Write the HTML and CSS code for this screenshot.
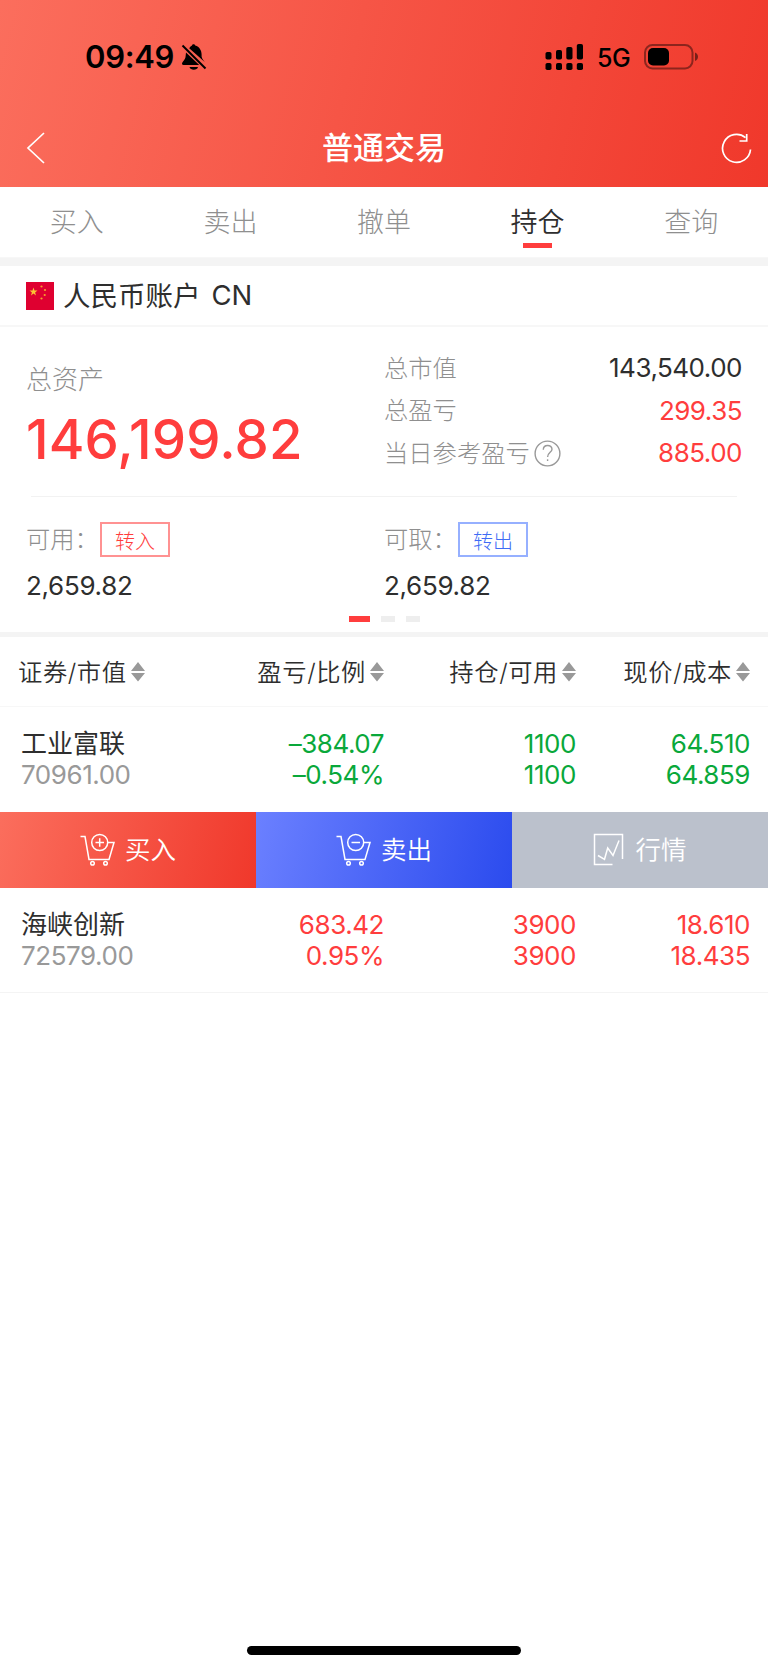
FILE: index.html
```html
<!DOCTYPE html>
<html lang="zh-CN">
<head>
  <meta charset="UTF-8" />
  <meta name="viewport" content="width=device-width, initial-scale=1.0"/>
  <title>普通交易</title>
  <link rel="stylesheet" href="styles.css">
</head>
<body>

  <header class="header">
    <div class="status-bar">
      <div class="status-left">
        <span class="clock">09:49</span>
        <svg class="bell" width="26" height="28" viewBox="0 0 26 28">
          <path d="M8.2 5.2C9 3.9 10 3 11 2.5C11.2 .9 13.8 .9 14.2 2.5C18.5 3.7 20.6 7.5 20.6 11.5V13.5C21 16 22.5 17.3 24 19.3Z" />
          <path d="M5 9.5L18.2 22H2.5C.9 22 .6 20.3 1.5 19.2C3.5 16.8 4.6 15.5 4.7 12.5Z" />
          <path d="M8.5 24h8.5c-.6 3.6-7.8 3.6-8.5 0z" />
          <path class="slash" d="M1.5 2.5L24.5 25.5" />
        </svg>
      </div>
      <div class="status-right">
        <svg class="signal" width="39" height="28" viewBox="0 0 39 28">
          <rect x="0.5" y="9" width="6" height="7.5" rx="1.8" />
          <rect x="11" y="7" width="6" height="9.5" rx="1.8" />
          <rect x="21.3" y="4" width="6.2" height="12.5" rx="1.8" />
          <rect x="31.8" y="1" width="6.2" height="15.5" rx="1.8" />
          <rect x="0.5" y="20" width="6" height="7" rx="1.8" />
          <rect x="11" y="20" width="6" height="7" rx="1.8" />
          <rect x="21.3" y="20" width="6.2" height="7" rx="1.8" />
          <rect x="31.8" y="20" width="6.2" height="7" rx="1.8" />
        </svg>
        <span class="network">5G</span>
        <svg class="battery" width="56" height="26" viewBox="0 0 56 26">
          <rect x="1" y="1" width="47.5" height="23.5" rx="7.5" fill="none" stroke="#000" stroke-opacity=".42" stroke-width="2" />
          <path d="M51 8.5c4 1.5 4 7 0 8.5z" fill-opacity=".5" />
          <rect x="4" y="4" width="21" height="17.5" rx="5" />
        </svg>
      </div>
    </div>
    <div class="nav-bar">
      <svg class="back" width="20" height="32" viewBox="0 0 20 32">
        <path d="M18 1L2 16L18 31" />
      </svg>
      <h1>普通交易</h1>
      <svg class="refresh" width="32" height="32" viewBox="0 0 32 32">
        <path d="M24.5 4.6A14 14 0 1 0 29.5 16.5" />
        <path d="M25.7 1V8H18.5" />
      </svg>
    </div>
  </header>

  <nav class="tabs">
    <a class="tab">买入</a>
    <a class="tab">卖出</a>
    <a class="tab">撤单</a>
    <a class="tab active">持仓</a>
    <a class="tab">查询</a>
  </nav>

  <section class="account">
    <svg class="flag" width="28" height="28" viewBox="0 0 28 28">
      <rect width="28" height="28" fill="#df0030" />
      <path fill="#fbc534" d="M7.5 5.5l1 3h3l-2.4 1.9.9 3-2.5-1.8-2.5 1.8.9-3-2.4-1.9h3z" />
      <g fill="#f5a02e">
        <circle cx="15.5" cy="4.5" r="1.1" />
        <circle cx="19" cy="8" r="1.1" />
        <circle cx="18.7" cy="13" r="1.1" />
        <circle cx="15.5" cy="16.5" r="1.1" />
      </g>
    </svg>
    <span class="account-name">人民币账户</span>
    <span class="account-code">CN</span>
  </section>

  <section class="summary">
    <div class="assets">
      <div class="total">
        <div class="total-label">总资产</div>
        <div class="total-value">146,199.82</div>
      </div>
      <div class="stats">
        <div class="stat"><span>总市值</span><b>143,540.00</b></div>
        <div class="stat"><span>总盈亏</span><b class="up">299.35</b></div>
        <div class="stat">
          <span>当日参考盈亏</span>
          <svg class="help" width="27" height="27" viewBox="0 0 27 27">
            <circle cx="13.5" cy="13.5" r="12.4" />
            <path d="M9.3 9.7C9.3 4.2 18 4.2 18 9.2C18 12.3 13.6 12.5 13.6 17" />
            <path d="M13.6 19.3V21" />
          </svg>
          <b class="up">885.00</b>
        </div>
      </div>
    </div>

    <div class="cash">
      <div class="cash-item">
        <div class="cash-label"><span>可用：</span><button class="btn-in">转入</button></div>
        <div class="cash-value">2,659.82</div>
      </div>
      <div class="cash-item">
        <div class="cash-label"><span>可取：</span><button class="btn-out">转出</button></div>
        <div class="cash-value">2,659.82</div>
      </div>
    </div>

    <div class="dots">
      <i class="on"></i><i></i><i></i>
    </div>
  </section>

  <section class="positions">
    <div class="row head">
      <div>证券/市值<svg class="sort" width="14" height="20" viewBox="0 0 14 20"><path d="M7 0L14 9H0zM0 11H14L7 19.5z" /></svg></div>
      <div>盈亏/比例<svg class="sort" width="14" height="20" viewBox="0 0 14 20"><path d="M7 0L14 9H0zM0 11H14L7 19.5z" /></svg></div>
      <div>持仓/可用<svg class="sort" width="14" height="20" viewBox="0 0 14 20"><path d="M7 0L14 9H0zM0 11H14L7 19.5z" /></svg></div>
      <div>现价/成本<svg class="sort" width="14" height="20" viewBox="0 0 14 20"><path d="M7 0L14 9H0zM0 11H14L7 19.5z" /></svg></div>
    </div>

    <div class="row stock down">
      <div><span class="name">工业富联</span><span class="worth">70961.00</span></div>
      <div><span>–384.07</span><span>–0.54%</span></div>
      <div><span>1100</span><span>1100</span></div>
      <div><span>64.510</span><span>64.859</span></div>
    </div>

    <div class="actions">
      <a class="action buy">
        <svg width="35" height="34" viewBox="0 0 35 34">
          <path d="M0.5 3.5H5L9 26.5H29L34 9.5H28" />
          <circle cx="19.7" cy="9.5" r="8" />
          <path d="M15.5 9.5H24M19.7 5.2V13.7" />
          <circle cx="12.5" cy="30.3" r="1.8" />
          <circle cx="25.5" cy="30.3" r="1.8" />
        </svg>
        <span>买入</span>
      </a>
      <a class="action sell">
        <svg width="35" height="34" viewBox="0 0 35 34">
          <path d="M0.5 3.5H5L9 26.5H29L34 9.5H28" />
          <circle cx="19.7" cy="9.5" r="8" />
          <path d="M15.5 9.5H24" />
          <circle cx="12.5" cy="30.3" r="1.8" />
          <circle cx="25.5" cy="30.3" r="1.8" />
        </svg>
        <span>卖出</span>
      </a>
      <a class="action quote">
        <svg width="32" height="34" viewBox="0 0 32 34">
          <path d="M29.5 26V1.5H1.5V31.5H19.5" />
          <path d="M5 22.5L11.5 26.3L14.7 15L20 22.5L26 7.5" />
        </svg>
        <span>行情</span>
      </a>
    </div>

    <div class="row stock up">
      <div><span class="name">海峡创新</span><span class="worth">72579.00</span></div>
      <div><span>683.42</span><span>0.95%</span></div>
      <div><span>3900</span><span>3900</span></div>
      <div><span>18.610</span><span>18.435</span></div>
    </div>
  </section>

  <footer class="home-indicator"><i></i></footer>

</body>
</html>
```
FILE: styles.css
```css
* {
  box-sizing: border-box;
}

body {
  display: flex;
  flex-direction: column;
  width: 768px;
  height: 1669px;
  margin: 0;
  background: #fff;
  color: #2e2e2e;
  font-family: Inter, "Noto Sans CJK SC", sans-serif;
  overflow: hidden;
}

svg {
  display: block;
  flex: none;
}

/* header */
.header {
  height: 187px;
  background: linear-gradient(104deg, #fb6e5d 0%, #f65546 45%, #f0382b 100%);
}

.status-bar {
  display: flex;
  justify-content: space-between;
  height: 110px;
  padding: 3px 68px 0 85px;
  color: #000;
}

.status-left,
.status-right {
  display: flex;
  align-items: center;
}

.clock {
  width: 96px;
  font-size: 31px;
  font-weight: 600;
  letter-spacing: -0.3px;
}

.slash {
  fill: none;
  stroke: #000;
  stroke-width: 2;
}

.network {
  width: 47px;
  margin-left: 13px;
  padding-top: 3px;
  font-size: 25px;
  font-weight: 500;
  letter-spacing: -0.5px;
}

.nav-bar {
  display: flex;
  align-items: center;
  justify-content: space-between;
  height: 77px;
  padding: 0 15px 0 26px;
}

.nav-bar svg {
  fill: none;
  stroke: #fff;
  stroke-width: 1.7;
}

.back {
  margin-top: -1px;
}

.refresh {
  margin-top: 1px;
}

.nav-bar h1 {
  margin: 0 0 0 1px;
  padding-bottom: 6px;
  color: #fff;
  font-size: 31px;
  font-weight: 500;
}

/* tabs */
.tabs {
  display: flex;
  height: 71px;
  border-bottom: 1px solid #f7f7f7;
}

.tab {
  display: flex;
  flex-direction: column;
  align-items: center;
  flex: 1;
  padding-top: 16px;
  color: #8f8f8f;
  font-size: 27px;
  font-weight: 300;
  line-height: 40px;
}

.tab.active {
  color: #2e2e2e;
  font-weight: 350;
}

.tab.active::after {
  content: "";
  width: 29px;
  height: 5px;
  background: #ff3d3d;
}

/* account */
.account {
  display: flex;
  align-items: center;
  height: 69px;
  padding-left: 26px;
  border-top: 8px solid #f4f4f4;
  border-bottom: 2px solid #f7f7f7;
  font-size: 27.5px;
}

.account-name {
  margin-left: 9px;
  padding-bottom: 4px;
}

.account-code {
  margin-left: 11px;
  padding-bottom: 1px;
}

/* summary */
.summary {
  height: 310px;
  border-bottom: 5px solid #f4f4f4;
}

.assets {
  display: flex;
  height: 169px;
  margin: 0 26px;
}

.total {
  width: 358px;
  padding-top: 34px;
}

.total-label {
  color: #8f8f8f;
  font-size: 26px;
  font-weight: 300;
  line-height: 38px;
}

.total-value {
  margin-top: 7px;
  color: #ff3d3d;
  font-size: 54.5px;
  font-weight: 500;
  line-height: 66px;
  letter-spacing: 0.1px;
}

.stats {
  flex: 1;
  padding-top: 20px;
}

.stat {
  display: flex;
  align-items: center;
  height: 42.5px;
  color: #8f8f8f;
  font-size: 24.3px;
  font-weight: 300;
}

.stat span {
  padding-bottom: 4px;
}

.stat b {
  margin-left: auto;
  padding-bottom: 1px;
  color: #2e2e2e;
  font-size: 26px;
  font-weight: 400;
  letter-spacing: -0.5px;
}

.stat b.up {
  color: #ff3d3d;
}

.help {
  margin-left: 4px;
  fill: none;
  stroke: #999;
  stroke-width: 1.4;
}

.cash {
  display: flex;
  height: 120px;
  margin: 0 31px;
  padding-top: 24px;
  border-top: 1px solid #f2f2f2;
}

.cash-item {
  flex: none;
  width: 353px;
}

.cash-item:first-child {
  width: 358px;
  margin-left: -5px;
}

.cash-label {
  display: flex;
  align-items: center;
  height: 36px;
  color: #8f8f8f;
  font-size: 24.3px;
  font-weight: 300;
}

.cash-label span {
  width: 74px;
  padding-bottom: 3px;
  white-space: nowrap;
}

.cash-label button {
  width: 70px;
  height: 35px;
  padding: 4px 0 0;
  border: 2px solid;
  background: none;
  font-family: inherit;
  font-size: 20px;
  font-weight: 300;
  line-height: 28px;
}

.cash-label .btn-in {
  border-color: #ff9292;
  color: #ff3d3d;
}

.cash-label .btn-out {
  border-color: #96b0ff;
  color: #3f6cf5;
}

.cash-value {
  margin-top: 14px;
  font-size: 26px;
  line-height: 30px;
  letter-spacing: -0.3px;
}

.dots {
  display: flex;
  gap: 11px;
  padding-left: 349px;
}

.dots i {
  width: 14px;
  height: 6px;
  background: #eee;
}

.dots .on {
  width: 21px;
  background: #ff3d3d;
}

/* positions */
.row {
  display: grid;
  grid-template-columns: 174px 192px 192px 174px;
  padding: 0 18px;
  text-align: right;
}

.head {
  height: 70px;
  padding-bottom: 3px;
  border-bottom: 1px solid #f7f7f7;
  font-size: 24.3px;
  font-weight: 350;
  letter-spacing: 0.6px;
}

.head div {
  display: flex;
  align-items: center;
  justify-content: flex-end;
}

.head div:first-child {
  justify-content: flex-start;
}

.sort {
  margin: 3px 0 0 4px;
  fill: #999;
}

.stock {
  height: 105px;
  padding-top: 21px;
  font-size: 26px;
  line-height: 31px;
  letter-spacing: -0.45px;
}

.stock span {
  display: block;
}

.stock div:first-child {
  padding-left: 3px;
  text-align: left;
}

.stock .name {
  height: 31px;
  color: #2e2e2e;
  letter-spacing: 0;
}

.stock .worth {
  color: #999;
}

.stock.down {
  color: #09a83a;
}

.stock.up {
  border-bottom: 1px solid #f4f4f4;
  color: #ff3d3d;
}

.actions {
  display: flex;
  height: 76px;
}

.action {
  display: flex;
  align-items: center;
  justify-content: center;
  gap: 10px;
  flex: 1;
  color: #fff;
  font-size: 25.5px;
  font-weight: 350;
}

.action svg {
  fill: none;
  stroke: #fff;
  stroke-width: 1.5;
}

.action span {
  padding-bottom: 5px;
}

.buy {
  background: linear-gradient(104deg, #fb6e5d, #f0382b);
}

.sell {
  background: linear-gradient(104deg, #6b80ff, #2b4bee);
}

.quote {
  background: #bbc1cc;
}

/* home bar */
.home-indicator {
  display: flex;
  justify-content: center;
  margin-top: auto;
  padding-bottom: 14px;
}

.home-indicator i {
  width: 274px;
  height: 9px;
  border-radius: 5px;
  background: #000;
}
```
